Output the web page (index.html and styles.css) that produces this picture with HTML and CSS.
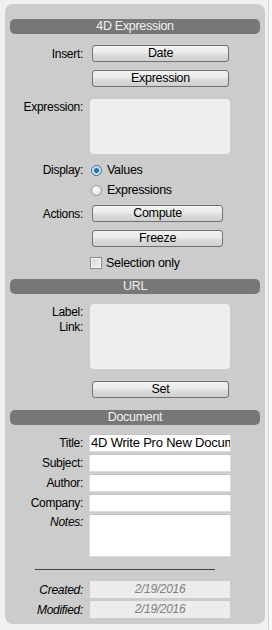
FILE: index.html
```html
<!DOCTYPE html>
<html>
<head>
<meta charset="utf-8">
<link rel="stylesheet" href="styles.css">
</head>
<body>
<div class="frame">
  <div class="panel">
    <div class="header">4D Expression</div>

    <div class="row r-insert">
      <div class="label">Insert:</div>
      <div class="btn wide">Date</div>
    </div>
    <div class="row r-expbtn">
      <div></div>
      <div class="btn wide">Expression</div>
    </div>
    <div class="row r-exparea">
      <div class="label top">Expression:</div>
      <div class="area a-exp"></div>
    </div>
    <div class="row r-display">
      <div class="label">Display:</div>
      <div class="opt"><span class="radio on"></span>Values</div>
    </div>
    <div class="row r-display2">
      <div></div>
      <div class="opt"><span class="radio"></span>Expressions</div>
    </div>
    <div class="row r-actions">
      <div class="label">Actions:</div>
      <div class="btn narrow">Compute</div>
    </div>
    <div class="row r-freeze">
      <div></div>
      <div class="btn narrow">Freeze</div>
    </div>
    <div class="row r-check">
      <div></div>
      <div class="opt"><span class="check"></span>Selection only</div>
    </div>

    <div class="header h-url">URL</div>
    <div class="row r-url">
      <div class="label top stack"><span>Label:</span><span>Link:</span></div>
      <div class="area a-url"></div>
    </div>
    <div class="row r-set">
      <div></div>
      <div class="btn wide">Set</div>
    </div>

    <div class="header h-doc">Document</div>
    <div class="fields">
      <div class="row f">
        <div class="label">Title:</div>
        <div class="input"><span class="val">4D Write Pro New Document</span></div>
      </div>
      <div class="row f">
        <div class="label">Subject:</div>
        <div class="input"></div>
      </div>
      <div class="row f">
        <div class="label">Author:</div>
        <div class="input"></div>
      </div>
      <div class="row f">
        <div class="label">Company:</div>
        <div class="input"></div>
      </div>
      <div class="row f">
        <div class="label top it">Notes:</div>
        <div class="input notes"></div>
      </div>
    </div>
    <div class="sep"></div>
    <div class="row d r-created">
      <div class="label it">Created:</div>
      <div class="date">2/19/2016</div>
    </div>
    <div class="row d r-modified">
      <div class="label it">Modified:</div>
      <div class="date">2/19/2016</div>
    </div>
  </div>
  <div class="gutter"></div>
</div>
</body>
</html>
```

FILE: styles.css
```css
html, body {
  margin: 0;
  padding: 0;
  background: #f0f0f0;
}
body {
  font-family: "Liberation Sans", Arial, sans-serif;
  font-size: 12px;
  letter-spacing: -0.3px;
  color: #000;
}
.frame {
  display: flex;
  width: 272px;
  height: 630px;
}
.panel {
  margin: 4px 0 0 5px;
  width: 260px;
  height: 620px;
  background: #cccccc;
  border-radius: 8px;
  padding: 15px 5px 0 5px;
  box-sizing: border-box;
  display: flex;
  flex-direction: column;
}
.gutter {
  width: 3px;
  margin-left: 3px;
  border-left: 1px solid #d6d6d6;
  background: #f7f7f7;
  height: 630px;
}
.header {
  height: 15px;
  line-height: 15px;
  background: #777777;
  border-radius: 5px;
  color: #f2f2f2;
  text-align: center;
  font-size: 12.5px;
}
.row {
  display: grid;
  grid-template-columns: 73px 140px;
  column-gap: 7px;
  align-items: center;
}
.label {
  text-align: right;
  white-space: nowrap;
}
.label.top {
  align-self: start;
  padding-top: 1px;
}
.label.stack {
  display: flex;
  flex-direction: column;
  align-items: flex-end;
  line-height: 15px;
  padding-top: 1px;
}
.it { font-style: italic; }
.btn {
  height: 17px;
  box-sizing: border-box;
  border: 1px solid #707070;
  border-radius: 3px;
  background: linear-gradient(#f2f2f2 0%, #ebebeb 45%, #dddddd 55%, #cfcfcf 100%);
  text-align: center;
  line-height: 15px;
  margin-left: 2px;
  font-size: 12.5px;
}
.btn.wide { width: 137px; }
.btn.narrow { width: 131px; }
.area {
  background: #eeeeee;
  border-radius: 4px;
}
.a-exp { height: 55px; }
.a-url { height: 65px; }
.opt {
  display: flex;
  align-items: center;
  height: 20px;
  font-size: 12.5px;
}
.radio {
  width: 11px;
  height: 11px;
  border-radius: 50%;
  box-sizing: border-box;
  border: 1px solid #9a9a9a;
  background: radial-gradient(circle at 40% 35%, #ffffff 0%, #e4e4e4 60%, #cfcfcf 100%);
  margin: 0 5px 0 1px;
}
.radio.on {
  border-color: #3f6d92;
  background: radial-gradient(circle at 50% 50%, #2e7fb4 0%, #1f5f8f 30%, #9fc8e4 40%, #e6f0f7 70%, #c4d7e6 100%);
}
.check {
  width: 12px;
  height: 12px;
  box-sizing: border-box;
  border: 1px solid #8e8f8f;
  background: linear-gradient(135deg, #d5d5d5 0%, #f4f4f4 100%);
  box-shadow: inset 0 0 0 1px #f4f4f4;
  margin: 0 4px 0 0;
}
.r-insert { margin-top: 11px; }
.r-expbtn { margin-top: 8px; }
.r-exparea { margin-top: 12px; }
.r-display { margin-top: 6px; }
.r-display2 { margin-top: 0; }
.r-actions { margin-top: 5px; }
.r-freeze { margin-top: 8px; }
.r-check { margin-top: 6px; }
.h-url { margin-top: 6px; }
.r-url { margin-top: 10px; }
.r-set { margin-top: 12px; }
.h-doc { margin-top: 12px; }
.fields {
  margin-top: 9px;
  display: flex;
  flex-direction: column;
  gap: 2px;
}
.row.f { grid-template-columns: 73px 142px; column-gap: 6px; }
.input {
  height: 18px;
  box-sizing: border-box;
  background: #ffffff;
  border: 1px solid #dcdcdc;
  border-top-color: #c4c4c4;
  overflow: hidden;
  white-space: nowrap;
}
.input .val {
  font-size: 13px;
  letter-spacing: -0.2px;
  line-height: 16px;
  padding-left: 1px;
}
.input.notes { height: 43px; }
.sep {
  margin: 12px 0 0 25px;
  width: 180px;
  height: 1px;
  background: #444444;
}
.row.d { grid-template-columns: 73px 140px; }
.r-created { margin-top: 11px; }
.r-modified { margin-top: 3px; }
.date {
  height: 17px;
  line-height: 17px;
  background: #ececec;
  color: #808080;
  font-style: italic;
  text-align: center;
}
```
